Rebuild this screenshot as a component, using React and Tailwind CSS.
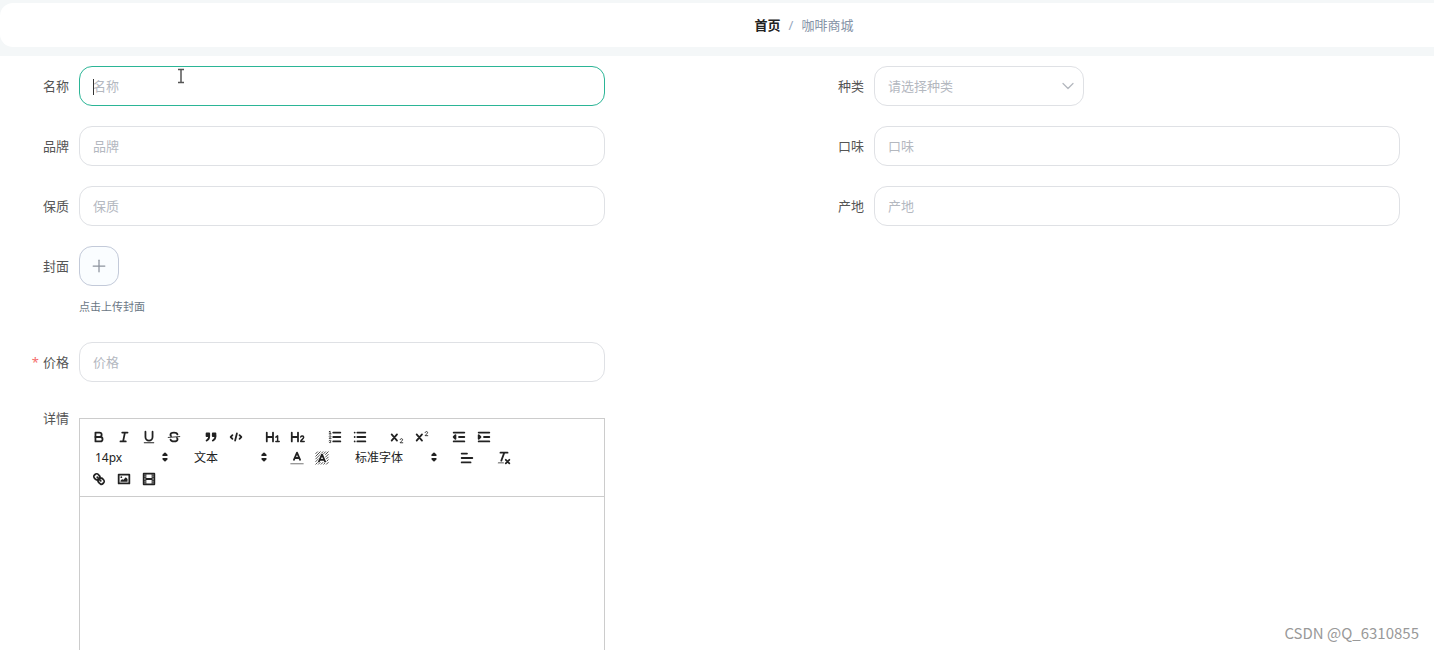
import React, { useState } from 'react';
import { ChevronDown, Plus } from 'lucide-react';

// 18x18 toolbar glyphs, stroked with the current colour
const icons = {
  bold: (
    <>
      <path d="M5,4H9.5a2.5,2.5,0,0,1,0,5H5Z" />
      <path d="M5,9h5.5a2.5,2.5,0,0,1,0,5H5Z" />
    </>
  ),
  italic: <path d="M7,4H13M5,14H11M8,14L10,4" />,
  underline: (
    <>
      <path d="M5,3V9a4,4,0,0,0,8,0V3" />
      <rect x="3" y="15" width="12" height="1" rx="0.5" fill="currentColor" stroke="none" />
    </>
  ),
  strike: (
    <>
      <path strokeWidth="1" d="M15.5,8.5L2.5,9.5" />
      <path d="M12.9,6C12.5,4.900,11,4,9,4C6.700,4,5,5.100,5,6.500C5,7.200,5.300,7.700,5.700,8" />
      <path d="M5.100,12C5.500,13.100,7,14,9,14C11.300,14,13,12.900,13,11.500C13,10.800,12.700,10.300,12.300,10" />
    </>
  ),
  blockquote: (
    <>
      <rect x="4" y="5" width="3" height="3" fill="currentColor" />
      <rect x="11" y="5" width="3" height="3" fill="currentColor" />
      <path d="M7,8c0,4.031-3,5-3,5M14,8c0,4.031-3,5-3,5" />
    </>
  ),
  code: <path d="M5,7L3,9L5,11M13,7L15,9L13,11M10,5L8,13" />,
  h1: (
    <>
      <path d="M2,4V14M9,4V14M2,9H9" />
      <path strokeWidth="1.6" d="M12.200,9.200L14.200,7.700V14M12.200,14H16" />
    </>
  ),
  h2: (
    <>
      <path d="M2,4V14M9,4V14M2,9H9" />
      <path strokeWidth="1.6" d="M12,9C12.800,7.400,15.400,7.600,15.400,9.400C15.400,11.200,12.400,12,12,14H16" />
    </>
  ),
  ordered: (
    <>
      <path d="M7,4H15M7,9H15M7,14H15" />
      <path
        strokeWidth="1"
        d="M2.5,3L3.500,2.500V5.500M2.5,5.500H4.500M4.5,10.5h-2c0-.234,1.85-1.076,1.85-2.234A0.959,0.959,0,0,0,2.5,8.156M2.5,14.846a0.959,0.959,0,0,0,1.85-.109A0.7,0.7,0,0,0,3.75,14a0.688,0.688,0,0,0,.6-0.736,0.959,0.959,0,0,0-1.85-.109"
      />
    </>
  ),
  bullet: <path d="M6,4H15M6,9H15M6,14H15M3,4H3.010M3,9H3.010M3,14H3.010" />,
  sub: (
    <>
      <path d="M3,6L9,13M9,6L3,13" />
      <path strokeWidth="1" d="M12.5,11.900C12.900,10.400,15.300,10.500,15.300,12C15.300,13.700,12.700,14.200,12.500,15.500H15.500" />
    </>
  ),
  sup: (
    <>
      <path d="M3,6L9,13M9,6L3,13" />
      <path strokeWidth="1" d="M12.5,3.900C12.900,2.400,15.300,2.500,15.300,4C15.300,5.700,12.700,6.200,12.500,7.500H15.500" />
    </>
  ),
  outdent: (
    <>
      <path d="M3,14H15M3,4H15M9,9H15" />
      <path fill="currentColor" d="M5,7V11L3,9Z" />
    </>
  ),
  indent: (
    <>
      <path d="M3,14H15M3,4H15M9,9H15" />
      <path fill="currentColor" d="M3,7V11L5,9Z" />
    </>
  ),
  color: (
    <>
      <path d="M5.5,11L9,3L12.5,11M11.630,9H6.380" />
      <path strokeWidth="1" strokeOpacity="0.7" d="M2,15.500H16" />
    </>
  ),
  background: (
    <>
      <path
        strokeWidth="0.9"
        d="M2,4L4,2M2,7L7,2M2,10L10,2M2,13L13,2M2,16L5,13M13,5L16,2M5,16L7,14M8,16L10,14M11,16L16,11M14,16L16,14M13,8L16,5M14,10L16,8"
      />
      <path stroke="white" strokeWidth="3.6" d="M5.5,13L9,5L12.5,13" />
      <path d="M5.5,13L9,5L12.5,13M11.630,11H6.380" />
    </>
  ),
  align: <path d="M3,9H15M3,14H13M3,4H9" />,
  clean: (
    <>
      <path d="M5,3H13M6,12L9.350,3M11,11L15,15M15,11L11,15" />
      <rect x="2" y="14" width="7" height="1" rx="0.5" fill="currentColor" stroke="none" />
    </>
  ),
  link: (
    <path d="M7,7L11,11M8.9,4.577a3.476,3.476,0,0,1,.36,4.679A3.476,3.476,0,0,1,4.577,8.9C3.185,7.5,2.035,6.4,4.217,4.217S7.5,3.185,8.9,4.577ZM13.423,9.1a3.476,3.476,0,0,0-4.679-.36,3.476,3.476,0,0,0,.36,4.679c1.392,1.392,2.5,2.542,4.679.36S14.815,10.5,13.423,9.1Z" />
  ),
  image: (
    <>
      <rect x="3" y="4" width="12" height="10" />
      <circle cx="6" cy="7" r="1" fill="currentColor" stroke="none" />
      <path fill="currentColor" stroke="none" d="M5,12V11L7,9L8,10L11,7L13,9V12Z" />
    </>
  ),
  video: (
    <>
      <rect x="3" y="3" width="12" height="12" />
      <path strokeWidth="1" d="M5.500,3V15M12.500,3V15M3,5.500H5M3,7.500H5M3,10.500H5M3,12.500H5M13,5.500H15M13,7.500H15M13,10.500H15M13,12.500H15" />
      <path d="M6,9H12" />
    </>
  ),
};

const firstGroups = [
  [['bold', '加粗'], ['italic', '斜体'], ['underline', '下划线'], ['strike', '删除线']],
  [['blockquote', '引用'], ['code', '代码块']],
  [['h1', '标题1'], ['h2', '标题2']],
  [['ordered', '有序列表'], ['bullet', '无序列表']],
  [['sub', '下标'], ['sup', '上标']],
  [['outdent', '减少缩进'], ['indent', '增加缩进']],
];

function ToolGroup({ items }) {
  return (
    <div className="mr-3 flex">
      {items.map(([name, label]) => (
        <button
          key={name}
          type="button"
          aria-label={label}
          className="flex h-[21px] w-[25px] items-center justify-center hover:text-[#06c]"
        >
          <svg
            viewBox="0 0 18 18"
            className="h-4 w-4"
            fill="none"
            stroke="currentColor"
            strokeWidth="2"
            strokeLinecap="round"
            strokeLinejoin="round"
          >
            {icons[name]}
          </svg>
        </button>
      ))}
    </div>
  );
}

function Picker({ label, options, width }) {
  return (
    <div className={`relative mr-3 h-[21px] ${width}`}>
      <select
        aria-label={label}
        className="block h-full w-full appearance-none bg-transparent pl-[9px] text-[12px] leading-[21px] outline-none"
      >
        {options.map((o) => (
          <option key={o}>{o}</option>
        ))}
      </select>
      <svg
        viewBox="0 0 18 18"
        className="pointer-events-none absolute top-0.5 right-0 h-4 w-4"
        fill="currentColor"
        stroke="currentColor"
        strokeWidth="2"
        strokeLinejoin="round"
      >
        <path d="M7,11L9,13L11,11ZM7,7L9,5L11,7Z" />
      </svg>
    </div>
  );
}

function Editor() {
  return (
    <div className="mt-4 min-w-0 flex-1 border border-[#ccc] text-[#222]">
      <div className="flex flex-wrap border-b border-[#ccc] px-1.5 py-[7px]">
        {firstGroups.map((items) => (
          <ToolGroup key={items[0][0]} items={items} />
        ))}
        <Picker label="字号" width="w-[87px]" options={['14px', '16px', '18px']} />
        <Picker label="标题" width="w-[87px]" options={['文本', '标题1', '标题2']} />
        <ToolGroup items={[['color', '字体颜色'], ['background', '背景颜色']]} />
        <Picker label="字体" width="w-[96px]" options={['标准字体', '衬线字体', '等宽字体']} />
        <ToolGroup items={[['align', '对齐方式']]} />
        <ToolGroup items={[['clean', '清除格式']]} />
        <ToolGroup items={[['link', '链接'], ['image', '图片'], ['video', '视频']]} />
      </div>
      <div
        id="detail"
        role="textbox"
        aria-label="详情"
        contentEditable
        suppressContentEditableWarning
        className="min-h-[300px] p-3 text-[13px] outline-none"
      />
    </div>
  );
}

function FormItem({ label, htmlFor, required, tall = 'h-10', className = '', children }) {
  return (
    <div className={`flex items-start ${className}`}>
      <label
        htmlFor={htmlFor}
        className={`flex w-[79px] shrink-0 items-center justify-end pr-2.5 text-[#555] ${tall}`}
      >
        {required && <span className="mr-1 text-[#f56c6c]">*</span>}
        {label}
      </label>
      {children}
    </div>
  );
}

function TextField({ id, label, active, value, onChange }) {
  return (
    <div className="relative min-w-0 flex-1">
      <input
        id={id}
        type="text"
        placeholder={label}
        value={value}
        onChange={onChange}
        className={`block h-10 w-full rounded-[13px] border bg-white px-[13px] text-[#555] outline-none placeholder:text-[#b4b8bf] ${
          active ? 'border-[#2bb596]' : 'border-[#dfe1e5]'
        }`}
      />
      {active && !value && <span className="absolute top-[13px] left-3.5 h-4 w-px bg-[#333]" />}
    </div>
  );
}

export default function App() {
  const [form, setForm] = useState({});
  const field = (id, label) => ({
    id,
    label,
    value: form[id] || '',
    onChange: (e) => setForm({ ...form, [id]: e.target.value }),
  });

  return (
    <div className="relative h-screen overflow-hidden bg-white font-['Noto_Sans','Noto_Sans_CJK_SC',sans-serif] text-[13px] leading-5">
      <header className="bg-[#f4f7f8] pt-[3px] pb-[9px]">
        <nav
          aria-label="面包屑"
          className="flex h-11 items-center justify-center rounded-l-[13px] bg-white pl-[174px]"
        >
          <a href="#home" className="font-bold text-[#222]">首页</a>
          <span className="mx-2 text-[#99a9bf]">/</span>
          <a href="#coffee" className="text-[#8492a6]">咖啡商城</a>
        </nav>
      </header>

      <form className="grid grid-cols-2 gap-x-[190px] gap-y-5 pt-[10px] pr-[34px]">
        <FormItem label="名称" htmlFor="name">
          <TextField {...field('name', '名称')} active />
        </FormItem>
        <FormItem label="种类" htmlFor="kind">
          <div className="relative w-[210px]">
            <select
              id="kind"
              defaultValue=""
              className="block h-10 w-full appearance-none rounded-[13px] border border-[#dfe1e5] bg-white px-[13px] text-[#b4b8bf] outline-none"
            >
              <option value="">请选择种类</option>
            </select>
            <ChevronDown
              className="pointer-events-none absolute top-2.5 right-1.5 h-5 w-5 text-[#b4b8bf]"
              strokeWidth={1.5}
            />
          </div>
        </FormItem>
        <FormItem label="品牌" htmlFor="brand">
          <TextField {...field('brand', '品牌')} />
        </FormItem>
        <FormItem label="口味" htmlFor="taste">
          <TextField {...field('taste', '口味')} />
        </FormItem>
        <FormItem label="保质" htmlFor="shelf">
          <TextField {...field('shelf', '保质')} />
        </FormItem>
        <FormItem label="产地" htmlFor="origin">
          <TextField {...field('origin', '产地')} />
        </FormItem>
        <FormItem label="封面" htmlFor="cover" className="col-start-1">
          <div className="pb-1.5">
            <button
              id="cover"
              type="button"
              aria-label="上传封面"
              className="flex h-10 w-10 items-center justify-center rounded-[13px] border border-[#c3cad9] bg-[#fafdff] text-[#8c939d]"
            >
              <Plus className="h-5 w-5" strokeWidth={1.5} />
            </button>
            <p className="mt-3 text-[11px] leading-[18px] text-[#6b7785]">点击上传封面</p>
          </div>
        </FormItem>
        <FormItem label="价格" htmlFor="price" required className="col-start-1">
          <TextField {...field('price', '价格')} />
        </FormItem>
        <FormItem label="详情" htmlFor="detail" tall="h-8" className="col-start-1">
          <Editor />
        </FormItem>
      </form>

      {/* text pointer over the name field */}
      <svg
        viewBox="0 0 8 16"
        className="pointer-events-none absolute top-[68px] left-[177px] h-4 w-2"
        fill="none"
        stroke="#555"
        strokeWidth="1.5"
      >
        <path d="M1,1.5H7M4,2V14M1,14.500H7" />
      </svg>

      <div className="pointer-events-none absolute right-[15px] bottom-[7px] font-['Noto_Sans_CJK_SC',sans-serif] text-[15px] text-[#999]">
        CSDN @Q_6310855
      </div>
    </div>
  );
}
